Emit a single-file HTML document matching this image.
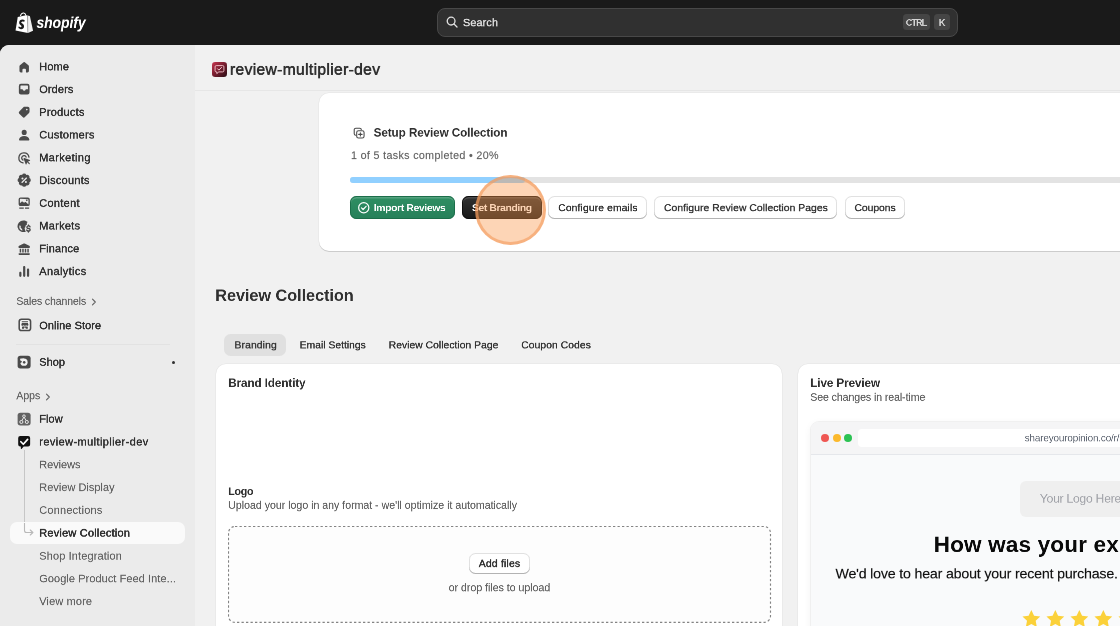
<!DOCTYPE html>
<html>
<head>
<meta charset="utf-8">
<title>Shopify</title>
<style>
*{box-sizing:border-box;margin:0;padding:0}
html,body{width:1120px;height:626px;overflow:hidden;position:relative;background:#1a1a1a;font-family:"Liberation Sans",sans-serif;color:#303030}
.abs{position:absolute}
#topbar{position:absolute;left:0;top:0;width:1120px;height:45px;background:#1a1a1a}
#frame{position:absolute;left:0;top:45px;width:1120px;height:581px;background:#f1f1f1;border-radius:9px 0 0 0;overflow:hidden}
#sidebar{position:absolute;left:0;top:-45px;width:195px;height:680px;background:#ebebeb}
#main{position:absolute;left:0;top:-45px;width:1140px;height:680px}
.t{will-change:transform;position:absolute;white-space:nowrap;line-height:1;transform-origin:0 0}
.card{position:absolute;background:#fff;border-radius:10px;box-shadow:0 1px 0 rgba(0,0,0,.13),0 0 0 .5px rgba(0,0,0,.06)}
.btn{position:absolute;border-radius:6.5px;background:#fff;box-shadow:inset 0 -1px 0 0 #b3b3b3,inset 0 0 0 1px #e1e1e1}
</style>
</head>
<body>
<div id="topbar">
  <svg class="abs" style="left:15px;top:12px;will-change:transform" width="18.8" height="21.3" viewBox="0 0 18.5 21">
    <path d="M5.3 4.1 C5.7 2.2 7.3 .7 8.6 .9 C9.9 1.1 10.6 2.5 10.7 3.6" fill="none" stroke="#fff" stroke-width="1"/>
    <path d="M2.7 5 L10.8 3.3 L12.4 3.5 L12.7 20.6 L.5 18.3 Z" fill="#fff"/>
    <path d="M12.4 3.5 L14.3 4 C14.6 4.1 14.8 4.3 14.8 4.6 L17.8 18.6 L12.7 20.6 Z" fill="#f0f0f0"/>
    <path d="M12.4 3.5 L12.7 20.6" stroke="#555" stroke-width=".35"/>
    <path d="M9.6 8.2 L9 9.9 C8.3 9.5 7.5 9.4 6.9 9.5 C5.9 9.7 6 10.5 6.5 10.9 C7.4 11.6 9 12.2 8.9 14.2 C8.8 15.9 7.5 17 5.9 16.9 C4.7 16.8 3.7 16.2 3.3 15.6 L3.8 14.1 C4.3 14.6 5.1 15.1 5.7 15 C6.5 14.9 6.6 14.1 6.2 13.6 C5.5 12.8 4 12.2 4.1 10.4 C4.2 8.7 5.5 7.5 7.3 7.5 C8.3 7.5 9.1 7.8 9.6 8.2 Z" fill="#1a1a1a"/>
  </svg>
  <div class="t" style="left:36px;top:15px;font-size:31.6px;color:#fff;transform:translate(0.5px,0.5px) scale(.5);font-weight:700;-webkit-text-stroke:0.24px #fff;font-style:italic;transform:translate(.5px,0px) scale(.437,.5);">shopify</div>
  <div class="abs" style="left:437px;top:8px;width:521px;height:29px;border-radius:8px;background:#303030;border:1px solid #484848"></div>
  <svg class="abs" style="left:446px;top:16px" width="12" height="12" viewBox="0 0 12 12"><circle cx="5.1" cy="5.1" r="3.9" fill="none" stroke="#e3e3e3" stroke-width="1.3"/><path d="M8 8 L11 11" stroke="#e3e3e3" stroke-width="1.3" stroke-linecap="round"/></svg>
  <div class="t" style="left:463px;top:17px;font-size:21.6px;color:#e3e3e3;transform:translate(0px,0.3px) scale(.5);-webkit-text-stroke:0.6px #e3e3e3;letter-spacing:0.314px;">Search</div>
  <div class="abs" style="left:903px;top:14px;width:27px;height:16px;border-radius:3.5px;background:#454545"></div>
  <div class="abs" style="left:934px;top:14px;width:16px;height:16px;border-radius:3.5px;background:#454545"></div>
  <div class="t" style="left:905px;top:18px;font-size:18px;color:#d4d4d4;transform:translate(0.8px,0.2px) scale(.5);font-weight:700;letter-spacing:-1.73px;">CTRL</div>
  <div class="t" style="left:938px;top:18px;font-size:18px;color:#d4d4d4;transform:translate(0.8px,0.2px) scale(.5);font-weight:700;">K</div>
</div>
<div id="frame">
  <div id="sidebar">
    <svg class="abs" style="left:16.4px;top:58.5px" width="16.4" height="16.4" viewBox="0 0 20 20" fill="#4a4a4a"><path transform="translate(1.1 1.3) scale(.89)" d="M9.15 2.95a1.35 1.35 0 0 1 1.7 0l4.95 4.15c.45.38.7.9.7 1.5v6.4a2 2 0 0 1-2 2h-1.3a.8.8 0 0 1-.8-.8v-2.9a1.3 1.3 0 0 0-1.3-1.3h-2.2a1.3 1.3 0 0 0-1.3 1.3v2.9a.8.8 0 0 1-.8.8h-1.3a2 2 0 0 1-2-2v-6.4c0-.6.25-1.12.7-1.5z"/></svg>
    <div class="t" style="left:39px;top:61px;font-size:22px;color:#303030;transform:translate(0.2px,0.3px) scale(.5);-webkit-text-stroke:0.76px #303030;letter-spacing:0.238px;">Home</div>
    <svg class="abs" style="left:16.4px;top:81.2px" width="16.4" height="16.4" viewBox="0 0 20 20" fill="#4a4a4a"><path fill-rule="evenodd" d="M6 3.5h8a2.5 2.5 0 0 1 2.5 2.5v8a2.5 2.5 0 0 1-2.5 2.5h-8a2.5 2.5 0 0 1-2.5-2.5v-8a2.5 2.5 0 0 1 2.5-2.5zm0 1.9a.6.6 0 0 0-.6.6v4.2h2.3c.3 0 .5.2.6.4a1.8 1.8 0 0 0 3.4 0c.1-.2.3-.4.6-.4h2.3v-4.2a.6.6 0 0 0-.6-.6z"/></svg>
    <div class="t" style="left:39px;top:84px;font-size:22px;color:#303030;transform:translate(0.2px,0px) scale(.5);-webkit-text-stroke:0.76px #303030;letter-spacing:0.19px;">Orders</div>
    <svg class="abs" style="left:16.4px;top:104px" width="16.4" height="16.4" viewBox="0 0 20 20" fill="#4a4a4a"><path fill-rule="evenodd" d="M10.4 3.5h4.1a2 2 0 0 1 2 2v4.1c0 .5-.2 1-.6 1.4l-5 5a2 2 0 0 1-2.8 0l-4.1-4.1a2 2 0 0 1 0-2.8l5-5c.4-.4.9-.6 1.4-.6zm2.8 4.3a1 1 0 1 0 0-2 1 1 0 0 0 0 2z"/></svg>
    <div class="t" style="left:39px;top:106px;font-size:22px;color:#303030;transform:translate(0.2px,0.8px) scale(.5);-webkit-text-stroke:0.76px #303030;letter-spacing:0.51px;">Products</div>
    <svg class="abs" style="left:16.4px;top:126.7px" width="16.4" height="16.4" viewBox="0 0 20 20" fill="#4a4a4a"><path d="M10 3.5a3.1 3.1 0 1 1 0 6.2 3.1 3.1 0 0 1 0-6.2zm0 7.5c3.4 0 5.8 1.9 6.3 4.2.2.8-.5 1.3-1.2 1.3h-10.2c-.7 0-1.4-.5-1.2-1.3.5-2.3 2.9-4.2 6.3-4.2z"/></svg>
    <div class="t" style="left:39px;top:129px;font-size:22px;color:#303030;transform:translate(0.2px,0.5px) scale(.5);-webkit-text-stroke:0.76px #303030;letter-spacing:0.504px;">Customers</div>
    <svg class="abs" style="left:16.4px;top:149.5px" width="16.4" height="16.4" viewBox="0 0 20 20" fill="#4a4a4a"><g fill="none" stroke="#4a4a4a" stroke-width="1.6" stroke-linecap="round"><path d="M15.8 8.6a6.2 6.2 0 1 0-7.2 7.2"/><path d="M12.3 8.6a2.8 2.8 0 1 0-3.7 3.7"/></g><path d="M10.2 9.7l6.8 2.5c.5.2.5.8 0 1l-2.3.9 2 2c.3.3.3.7 0 1-.3.3-.7.3-1 0l-2-2-.9 2.3c-.2.5-.8.5-1 0l-2.5-6.8c-.2-.5.3-1.1.9-.9z"/></svg>
    <div class="t" style="left:39px;top:152px;font-size:22px;color:#303030;transform:translate(0.2px,0.3px) scale(.5);-webkit-text-stroke:0.76px #303030;letter-spacing:0.724px;">Marketing</div>
    <svg class="abs" style="left:16.4px;top:172.2px" width="16.4" height="16.4" viewBox="0 0 20 20" fill="#4a4a4a"><path fill-rule="evenodd" d="M7.36 3.63A2.9 2.9 0 0 1 12.64 3.63A2.9 2.9 0 0 1 16.37 7.36A2.9 2.9 0 0 1 16.37 12.64A2.9 2.9 0 0 1 12.64 16.37A2.9 2.9 0 0 1 7.36 16.37A2.9 2.9 0 0 1 3.63 12.64A2.9 2.9 0 0 1 3.63 7.36A2.9 2.9 0 0 1 7.36 3.63zM7.9 9.1a1.25 1.25 0 1 0 0-2.5 1.25 1.25 0 0 0 0 2.5zM13.3 7.8a.8.8 0 0 0-1.1-1.1l-5.5 5.5a.8.8 0 0 0 1.1 1.1zM12.1 13.4a1.25 1.25 0 1 0 0-2.5 1.25 1.25 0 0 0 0 2.5z"/></svg>
    <div class="t" style="left:39px;top:175px;font-size:22px;color:#303030;transform:translate(0.2px,0px) scale(.5);-webkit-text-stroke:0.76px #303030;letter-spacing:0.5px;">Discounts</div>
    <svg class="abs" style="left:16.4px;top:195px" width="16.4" height="16.4" viewBox="0 0 20 20" fill="#4a4a4a"><path fill-rule="evenodd" d="M5.5 2.9h9a2.3 2.3 0 0 1 2.3 2.3v6a2.3 2.3 0 0 1-2.3 2.3h-9a2.3 2.3 0 0 1-2.3-2.3v-6a2.3 2.3 0 0 1 2.3-2.3zm0 1.7a.7.7 0 0 0-.7.7v4.7l2-1.9c.4-.4 1-.4 1.4 0l1.6 1.5 1-.9c.4-.4 1-.4 1.4 0l3 2.8v-5.7a.7.7 0 0 0-.7-.7zm7.7 2.9a1 1 0 1 0 0-2 1 1 0 0 0 0 2z"/><path d="M4 15.2h5.5v1.5h-5.5zm7 0h5v1.5h-5z"/></svg>
    <div class="t" style="left:39px;top:197px;font-size:22px;color:#303030;transform:translate(0.2px,0.8px) scale(.5);-webkit-text-stroke:0.76px #303030;letter-spacing:0.59px;">Content</div>
    <svg class="abs" style="left:16.4px;top:217.7px" width="16.4" height="16.4" viewBox="0 0 20 20" fill="#4a4a4a"><path fill-rule="evenodd" d="M9.4 3c1.9 0 3.6.7 4.9 1.9l-.7.7c-.4.4-.5.9-.3 1.4l.1.3c.1.4 0 .8-.4 1l-.8.4c-.5.3-.8.8-.7 1.4l.1.4c0 .4-.1.7-.4.9-.5.3-.7.9-.6 1.4l.5 2.3c.1.5.4.9.8 1.1l.3.2a7.1 7.1 0 1 1-2.8-13.4zm-5 5.7a5.5 5.5 0 0 0 3.4 6.8l-.3-1.7c0-.3-.2-.5-.4-.7l-1.1-1c-.3-.3-.4-.7-.3-1.1l.1-.5c.1-.4 0-.8-.3-1z"/><path d="M15.2 7.7c.5 0 .85.38.85.85v.3c.95.25 1.65.85 1.9 1.7.12.5-.15.95-.62 1.08-.5.12-.95-.15-1.08-.62-.05-.25-.45-.5-1.05-.5-.7 0-1.05.35-1.05.7 0 .25.12.45 1.05.7l.35.05c1.2.25 2.5.85 2.5 2.4 0 1.2-.8 2.05-2 2.3v.35a.85.85 0 0 1-1.7 0v-.35c-1.05-.25-1.8-.95-2-1.8-.12-.5.25-.95.7-1.05.5-.05.85.25.95.6.12.35.6.6 1.2.6.85 0 1.2-.35 1.2-.7 0-.25-.12-.5-1.05-.7l-.35-.05c-1.2-.25-2.5-.85-2.5-2.4 0-1.05.85-1.9 1.9-2.15v-.45c0-.5.35-.85.85-.85z"/></svg>
    <div class="t" style="left:39px;top:220px;font-size:22px;color:#303030;transform:translate(0.2px,0.5px) scale(.5);-webkit-text-stroke:0.76px #303030;letter-spacing:0.592px;">Markets</div>
    <svg class="abs" style="left:16.4px;top:240.5px" width="16.4" height="16.4" viewBox="0 0 20 20" fill="#4a4a4a"><path d="M9.4 3.2a1.5 1.5 0 0 1 1.2 0l5.6 2.5c.5.2.8.7.8 1.2v.6c0 .6-.5 1-1 1h-12c-.5 0-1-.4-1-1v-.6c0-.5.3-1 .8-1.2zM4.5 9.5h1.8v4.5h-1.8zm3.1 0h1.8v4.5h-1.8zm3.1 0h1.8v4.5h-1.8zm3.1 0h1.8v4.5h-1.8zM4 14.8h12c.6 0 1 .4 1 1v.2c0 .6-.4 1-1 1h-12c-.6 0-1-.4-1-1v-.2c0-.6.4-1 1-1z"/></svg>
    <div class="t" style="left:39px;top:243px;font-size:22px;color:#303030;transform:translate(0.2px,0.3px) scale(.5);-webkit-text-stroke:0.76px #303030;letter-spacing:0.286px;">Finance</div>
    <svg class="abs" style="left:16.4px;top:263.2px" width="16.4" height="16.4" viewBox="0 0 20 20" fill="#4a4a4a"><path d="M5.3 10.6c.75 0 1.35.6 1.35 1.35v3.7a1.35 1.35 0 0 1-2.7 0v-3.7c0-.75.6-1.35 1.35-1.35zm4.7-7c.75 0 1.35.6 1.35 1.35v10.7a1.35 1.35 0 0 1-2.7 0v-10.7c0-.75.6-1.35 1.35-1.35zm4.7 3.2c.75 0 1.35.6 1.35 1.35v7.5a1.35 1.35 0 0 1-2.7 0v-7.5c0-.75.6-1.35 1.35-1.35z"/></svg>
    <div class="t" style="left:39px;top:266px;font-size:22px;color:#303030;transform:translate(0.2px,0px) scale(.5);-webkit-text-stroke:0.76px #303030;letter-spacing:0.746px;">Analytics</div>
    <div class="t" style="left:16px;top:295px;font-size:21.2px;color:#616161;transform:translate(0.3px,0.8px) scale(.5);-webkit-text-stroke:0.26px #616161;letter-spacing:-0.3px;">Sales channels</div>
    <svg class="abs" style="left:91px;top:297.5px" width="6" height="8" viewBox="0 0 6 8"><path d="M1.5 1.2 L4.3 4 L1.5 6.8" fill="none" stroke="#616161" stroke-width="1.1" stroke-linecap="round" stroke-linejoin="round"/></svg>
    <svg class="abs" style="left:16.6px;top:317px" width="16.25" height="16.25" viewBox="0 0 20 20"><rect x="2.7" y="2.7" width="14" height="14" rx="2.9" fill="#f3f3f3" stroke="#4a4a4a" stroke-width="1.9"/><path d="M5.9 5.3h7.6v1.3h-7.6zM6 7.5h7.4l.7 2.1c0 .8-.6 1.3-1.4 1.3-.7 0-1.3-.5-1.5-1.1-.2.6-.8 1.1-1.5 1.1s-1.3-.5-1.5-1.1c-.2.6-.8 1.1-1.5 1.1-.8 0-1.4-.5-1.4-1.3zM6.1 11.7c.3.1.6.2.9.2.6 0 1.1-.2 1.5-.5.3.3.7.5 1.2.5s.9-.2 1.2-.5c.4.3.9.5 1.5.5.3 0 .6-.1.9-.2v2.9h-2.3l-1.3-2.2-1.3 2.2h-2.3z" fill="#4a4a4a"/></svg>
    <div class="t" style="left:39px;top:320px;font-size:22px;color:#303030;transform:translate(0.2px,0.2px) scale(.5);-webkit-text-stroke:0.76px #303030;letter-spacing:0.136px;">Online Store</div>
    <div class="abs" style="left:16px;top:344px;width:154px;height:1px;background:#e2e2e2"></div>
    <svg class="abs" style="left:16.3px;top:354px" width="16.25" height="16.25" viewBox="0 0 20 20"><rect x="2" y="2" width="16" height="15.7" rx="3.3" fill="#4a4a4a"/><circle cx="9.8" cy="10.1" r="4.5" fill="#f2f2f2"/><rect x="5.1" y="5.6" width="5" height="2.3" rx=".7" fill="#f2f2f2"/><path d="M4.7 8.3L7.3 8.6 6.5 10.7 4.7 11.2z" fill="#4a4a4a"/><circle cx="10.1" cy="10.3" r="1.55" fill="#4a4a4a"/></svg>
    <div class="t" style="left:39px;top:356px;font-size:22px;color:#303030;transform:translate(0.2px,0.7px) scale(.5);-webkit-text-stroke:0.76px #303030;letter-spacing:0.004px;">Shop</div>
    <div class="abs" style="left:172.4px;top:361px;width:3px;height:3px;border-radius:2px;background:#303030"></div>
    <div class="t" style="left:16px;top:390px;font-size:21.2px;color:#616161;transform:translate(0.3px,0.3px) scale(.5);-webkit-text-stroke:0.26px #616161;letter-spacing:-0.166px;">Apps</div>
    <svg class="abs" style="left:45px;top:392.5px" width="6" height="8" viewBox="0 0 6 8"><path d="M1.5 1.2 L4.3 4 L1.5 6.8" fill="none" stroke="#616161" stroke-width="1.1" stroke-linecap="round" stroke-linejoin="round"/></svg>
    <svg class="abs" style="left:16.3px;top:410.5px" width="16.25" height="16.25" viewBox="0 0 20 20"><rect x="2" y="2" width="16" height="15.7" rx="3.3" fill="#626262"/><g fill="none" stroke="#f0f0f0" stroke-width="1.15"><circle cx="9.8" cy="6.4" r="1.6"/><circle cx="6.6" cy="13.5" r="1.9"/><circle cx="13.3" cy="13.5" r="1.9"/><path d="M9.4 8l-2 3.7M10.2 8l2.2 3.7"/></g></svg>
    <div class="t" style="left:39px;top:413px;font-size:22px;color:#303030;transform:translate(0.2px,0.6px) scale(.5);-webkit-text-stroke:0.76px #303030;letter-spacing:0.116px;">Flow</div>
    <svg class="abs" style="left:16.3px;top:434px" width="16.25" height="17.875" viewBox="0 0 20 22"><path d="M5.2 2.5h9.7a2.5 2.5 0 0 1 2.5 2.5v8a2.5 2.5 0 0 1-2.5 2.5h-5.4l-2.7 2.9c-.3.3-.8.1-.8-.3l-.1-2.6h-.7a2.5 2.5 0 0 1-2.5-2.5v-8a2.5 2.5 0 0 1 2.5-2.5z" fill="#111"/><path d="M6 9.5l3 3.1 5.3-6" fill="none" stroke="#fff" stroke-width="2.1" stroke-linecap="round" stroke-linejoin="round"/></svg>
    <div class="t" style="left:39px;top:436px;font-size:22px;color:#303030;transform:translate(0.2px,0.5px) scale(.5);-webkit-text-stroke:0.76px #303030;letter-spacing:0.814px;">review-multiplier-dev</div>
    <div class="abs" style="left:23.7px;top:449.5px;width:1px;height:79.5px;background:#c6c6c6"></div>
    <div class="abs" style="left:10px;top:521.5px;width:175px;height:22.5px;border-radius:7px;background:#fafafa"></div>
    <svg class="abs" style="left:21.7px;top:523px" width="14" height="14" viewBox="0 0 14 14"><path d="M2.5 0v7.5a2 2 0 0 0 2 2h6.3M8.3 7l2.6 2.5-2.6 2.5" fill="none" stroke="#b9b9b9" stroke-width="1.1" stroke-linecap="round" stroke-linejoin="round"/></svg>
    <div class="t" style="left:39px;top:459px;font-size:22px;color:#616161;transform:translate(0.2px,0.3px) scale(.5);-webkit-text-stroke:0.26px #616161;letter-spacing:-0.124px;">Reviews</div>
    <div class="t" style="left:39px;top:482px;font-size:22px;color:#616161;transform:translate(0.2px,0px) scale(.5);-webkit-text-stroke:0.26px #616161;letter-spacing:0.032px;">Review Display</div>
    <div class="t" style="left:39px;top:504px;font-size:22px;color:#616161;transform:translate(0.2px,0.8px) scale(.5);-webkit-text-stroke:0.26px #616161;letter-spacing:0.388px;">Connections</div>
    <div class="t" style="left:39px;top:527px;font-size:22px;color:#303030;transform:translate(0.2px,0.6px) scale(.5);-webkit-text-stroke:1px #303030;letter-spacing:0.408px;">Review Collection</div>
    <div class="t" style="left:39px;top:550px;font-size:22px;color:#616161;transform:translate(0.2px,0.6px) scale(.5);-webkit-text-stroke:0.26px #616161;letter-spacing:0.248px;">Shop Integration</div>
    <div class="t" style="left:39px;top:573px;font-size:22px;color:#616161;transform:translate(0.2px,0.3px) scale(.5);-webkit-text-stroke:0.26px #616161;letter-spacing:0.12px;">Google Product Feed Inte...</div>
    <div class="t" style="left:39px;top:596px;font-size:22px;color:#616161;transform:translate(0.2px,0px) scale(.5);-webkit-text-stroke:0.26px #616161;letter-spacing:0.258px;">View more</div>
  </div>
  <div id="main">
    <div class="abs" style="left:195px;top:90px;width:945px;height:1px;background:#e6e6e6"></div>
    <svg class="abs" style="left:212px;top:62px" width="15" height="15" viewBox="0 0 15 15"><defs><linearGradient id="g1" x1="0" y1="0" x2="1" y2="1"><stop offset="0" stop-color="#c93651"/><stop offset=".45" stop-color="#7c1f31"/><stop offset="1" stop-color="#2a0e15"/></linearGradient></defs><rect width="15" height="15" rx="3.2" fill="url(#g1)"/><path d="M4.3 3.6h6.4a1.2 1.2 0 0 1 1.2 1.2v3.9a1.2 1.2 0 0 1-1.2 1.2h-3.9l-2 1.7v-1.7h-.5a1.2 1.2 0 0 1-1.2-1.2v-3.9a1.2 1.2 0 0 1 1.2-1.2z" fill="none" stroke="#f6c9d1" stroke-width=".9"/><path d="M5.6 6.8l1.3 1.3 2.6-2.7" fill="none" stroke="#f6c9d1" stroke-width="1" stroke-linecap="round" stroke-linejoin="round"/></svg>
    <div class="t" style="left:230px;top:61px;font-size:31.2px;color:#303030;transform:translate(0px,0.7px) scale(.5);-webkit-text-stroke:1.1px #303030;letter-spacing:0.702px;">review-multiplier-dev</div>
    <div class="card" style="left:319px;top:93px;width:900px;height:157.5px"></div>
    <svg class="abs" style="left:352.6px;top:126.9px" width="12.3" height="12.3" viewBox="0 0 13 13" fill="none" stroke="#4a4a4a" stroke-width="1.15"><path d="M3.3 8.8h-.3a1.7 1.7 0 0 1-1.7-1.7v-4.1a1.7 1.7 0 0 1 1.7-1.7h4.1a1.7 1.7 0 0 1 1.7 1.7v.3"/><rect x="3.9" y="3.9" width="7.8" height="7.8" rx="1.9"/><path d="M7.8 6v3.6M6 7.8h3.6" stroke-linecap="round"/></svg>
    <div class="t" style="left:373px;top:127px;font-size:23.4px;color:#303030;transform:translate(0.6px,0.1px) scale(.5);font-weight:700;letter-spacing:-0.176px;">Setup Review Collection</div>
    <div class="t" style="left:351px;top:150px;font-size:21.4px;color:#616161;transform:translate(0px,0.5px) scale(.5);-webkit-text-stroke:0.26px #616161;letter-spacing:0.696px;">1 of 5 tasks completed • 20%</div>
    <div class="abs" style="left:350px;top:177.3px;width:885px;height:6px;border-radius:3px;background:#e3e3e3"></div>
    <div class="abs" style="left:350px;top:177.3px;width:175px;height:6px;border-radius:3px;background:#91d0ff"></div>
    <div class="abs" style="left:350px;top:196px;width:105px;height:23px;border-radius:6.5px;background:linear-gradient(#2f8f63,#26805a);box-shadow:inset 0 0 0 1px #1c6e4a,inset 0 1.5px 0 1px rgba(255,255,255,.18)"></div>
    <svg class="abs" style="left:357px;top:201.3px" width="13.5" height="13.5" viewBox="0 0 13.5 13.5" fill="none" stroke="#fff" stroke-width="1.2"><circle cx="6.75" cy="6.75" r="5.1"/><path d="M4.5 6.9l1.6 1.6 3-3.2" stroke-linecap="round" stroke-linejoin="round"/></svg>
    <div class="t" style="left:373px;top:202px;font-size:20.6px;color:#fff;transform:translate(0.8px,0.7px) scale(.5);font-weight:700;letter-spacing:-0.648px;">Import Reviews</div>
    <div class="abs" style="left:462px;top:196px;width:80.4px;height:23px;border-radius:6.5px;background:linear-gradient(#333,#181818);box-shadow:inset 0 0 0 1px #0e0e0e,inset 0 1.5px 0 1px rgba(255,255,255,.13)"></div>
    <div class="t" style="left:472px;top:202px;font-size:20.6px;color:#fff;transform:translate(0px,0.7px) scale(.5);font-weight:700;letter-spacing:-0.724px;">Set Branding</div>
    <div class="btn" style="left:548.3px;top:196px;width:99px;height:23px"></div>
    <div class="t" style="left:558px;top:202px;font-size:20.6px;color:#303030;transform:translate(0.2px,0.7px) scale(.5);-webkit-text-stroke:0.6px #303030;letter-spacing:0.272px;">Configure emails</div>
    <div class="btn" style="left:654.3px;top:196px;width:183px;height:23px"></div>
    <div class="t" style="left:664px;top:202px;font-size:20.6px;color:#303030;transform:translate(0px,0.7px) scale(.5);-webkit-text-stroke:0.6px #303030;letter-spacing:0.15px;">Configure Review Collection Pages</div>
    <div class="btn" style="left:845px;top:196px;width:60.3px;height:23px"></div>
    <div class="t" style="left:854px;top:202px;font-size:20.6px;color:#303030;transform:translate(0.5px,0.7px) scale(.5);-webkit-text-stroke:0.6px #303030;letter-spacing:-0.04px;">Coupons</div>
    <div class="abs" style="left:475px;top:175.3px;width:70.5px;height:70px;border-radius:50%;background:rgba(250,150,72,.4);border:3px solid rgba(243,156,94,.62)"></div>
    <div class="t" style="left:215px;top:287px;font-size:32.6px;color:#303030;transform:translate(0.2px,0.5px) scale(.5);font-weight:700;letter-spacing:-0.112px;">Review Collection</div>
    <div class="abs" style="left:224.3px;top:334px;width:62.2px;height:22.2px;border-radius:6.5px;background:#e0e0e0"></div>
    <div class="t" style="left:234px;top:339px;font-size:20.6px;color:#303030;transform:translate(0.5px,0.9px) scale(.5);-webkit-text-stroke:0.6px #303030;letter-spacing:0.278px;">Branding</div>
    <div class="t" style="left:299px;top:339px;font-size:20.6px;color:#303030;transform:translate(0.7px,0.9px) scale(.5);-webkit-text-stroke:0.6px #303030;letter-spacing:0.028px;">Email Settings</div>
    <div class="t" style="left:388px;top:339px;font-size:20.6px;color:#303030;transform:translate(0.7px,0.9px) scale(.5);-webkit-text-stroke:0.6px #303030;letter-spacing:0.08px;">Review Collection Page</div>
    <div class="t" style="left:521px;top:339px;font-size:20.6px;color:#303030;transform:translate(0.2px,0.9px) scale(.5);-webkit-text-stroke:0.6px #303030;letter-spacing:0.164px;">Coupon Codes</div>
    <div class="card" style="left:216px;top:364px;width:566px;height:300px"></div>
    <div class="t" style="left:228px;top:377px;font-size:23.4px;color:#303030;transform:translate(0.2px,0.5px) scale(.5);font-weight:700;letter-spacing:-0.188px;">Brand Identity</div>
    <div class="t" style="left:228px;top:486px;font-size:21.4px;color:#303030;transform:translate(0.2px,0.5px) scale(.5);font-weight:700;letter-spacing:-0.556px;">Logo</div>
    <div class="t" style="left:228px;top:499px;font-size:21.2px;color:#616161;transform:translate(0.2px,0.8px) scale(.5);-webkit-text-stroke:0.26px #616161;letter-spacing:-0.018px;">Upload your logo in any format - we'll optimize it automatically</div>
    <svg class="abs" style="left:227.9px;top:525.6px" width="544" height="98" viewBox="0 0 544 98"><rect x=".5" y=".5" width="542" height="95.9" rx="6.5" fill="#fdfdfd" stroke="#848484" stroke-width="1.15" stroke-dasharray="2.3 2.2"/></svg>
    <div class="btn" style="left:469.3px;top:553.2px;width:60.4px;height:21.3px"></div>
    <div class="t" style="left:478px;top:558px;font-size:20.6px;color:#303030;transform:translate(0.8px,0.4px) scale(.5);-webkit-text-stroke:0.8px #303030;letter-spacing:0.45px;">Add files</div>
    <div class="t" style="left:448px;top:582px;font-size:21.2px;color:#616161;transform:translate(0.7px,0.3px) scale(.5);-webkit-text-stroke:0.26px #616161;letter-spacing:-0.034px;">or drop files to upload</div>
    <div class="card" style="left:798px;top:364px;width:400px;height:300px"></div>
    <div class="t" style="left:810px;top:377px;font-size:23.4px;color:#303030;transform:translate(0.2px,0.5px) scale(.5);font-weight:700;letter-spacing:-0.194px;">Live Preview</div>
    <div class="t" style="left:810px;top:391px;font-size:21.2px;color:#616161;transform:translate(0.2px,0.8px) scale(.5);-webkit-text-stroke:0.26px #616161;letter-spacing:-0.182px;">See changes in real-time</div>
    <div class="abs" style="left:810.5px;top:421.5px;width:400px;height:260px;border-radius:8px;background:#f9fafb;box-shadow:0 0 0 1px #f0f0f0,0 2px 8px rgba(0,0,0,.06);overflow:hidden">
      <div class="abs" style="left:0;top:0;width:400px;height:33px;background:#f5f5f6;border-bottom:1px solid #e5e7eb"></div>
      <div class="abs" style="left:10.1px;top:12.7px;width:8px;height:8px;border-radius:50%;background:#ef5753"></div>
      <div class="abs" style="left:22.1px;top:12.7px;width:8px;height:8px;border-radius:50%;background:#fbb92d"></div>
      <div class="abs" style="left:33.7px;top:12.7px;width:8px;height:8px;border-radius:50%;background:#2bc253"></div>
      <div class="abs" style="left:47.2px;top:7.5px;width:360px;height:18.4px;border-radius:4px;background:#fff"></div>
      <div class="abs" style="left:209.3px;top:59.7px;width:200px;height:36px;border-radius:6px;background:#efefef"></div>
    </div>
    <div class="t" style="left:1024px;top:433px;font-size:19.8px;color:#5f6672;transform:translate(0.7px,0.4px) scale(.5);letter-spacing:-0.292px;">shareyouropinion.co/r/review</div>
    <div class="t" style="left:1039px;top:492px;font-size:24.4px;color:#a0a2a8;transform:translate(0.8px,0.6px) scale(.5);letter-spacing:-0.55px;">Your Logo Here</div>
    <div class="t" style="left:933px;top:533px;font-size:44.8px;color:#0a0a0a;transform:translate(0.8px,0.1px) scale(.5);font-weight:700;letter-spacing:0.452px;">How was your experience?</div>
    <div class="t" style="left:835px;top:566px;font-size:28.4px;color:#111;transform:translate(0.5px,0.4px) scale(.5);-webkit-text-stroke:0.3px #111;letter-spacing:-0.362px;">We'd love to hear about your recent purchase.</div>
    <svg class="abs" style="left:1022.3px;top:609.7px" width="18.7" height="17.8" viewBox="0 0 20 19"><path d="M10 0 L12.94 6.18 L19.51 6.91 L14.63 11.56 L15.88 18.09 L10 14.9 L4.12 18.09 L5.37 11.56 L.49 6.91 L7.06 6.18 Z" fill="#fbd13a"/></svg>
    <svg class="abs" style="left:1046.2px;top:609.7px" width="18.7" height="17.8" viewBox="0 0 20 19"><path d="M10 0 L12.94 6.18 L19.51 6.91 L14.63 11.56 L15.88 18.09 L10 14.9 L4.12 18.09 L5.37 11.56 L.49 6.91 L7.06 6.18 Z" fill="#fbd13a"/></svg>
    <svg class="abs" style="left:1070.1px;top:609.7px" width="18.7" height="17.8" viewBox="0 0 20 19"><path d="M10 0 L12.94 6.18 L19.51 6.91 L14.63 11.56 L15.88 18.09 L10 14.9 L4.12 18.09 L5.37 11.56 L.49 6.91 L7.06 6.18 Z" fill="#fbd13a"/></svg>
    <svg class="abs" style="left:1094px;top:609.7px" width="18.7" height="17.8" viewBox="0 0 20 19"><path d="M10 0 L12.94 6.18 L19.51 6.91 L14.63 11.56 L15.88 18.09 L10 14.9 L4.12 18.09 L5.37 11.56 L.49 6.91 L7.06 6.18 Z" fill="#fbd13a"/></svg>
    <svg class="abs" style="left:1117.9px;top:609.7px" width="18.7" height="17.8" viewBox="0 0 20 19"><path d="M10 0 L12.94 6.18 L19.51 6.91 L14.63 11.56 L15.88 18.09 L10 14.9 L4.12 18.09 L5.37 11.56 L.49 6.91 L7.06 6.18 Z" fill="#fbd13a"/></svg>
  </div>
</div>
</body>
</html>
